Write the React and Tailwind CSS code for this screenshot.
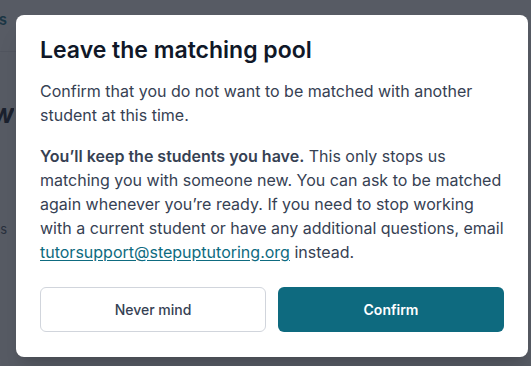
export default function App() {
  return (
    <div className="relative h-[366px] w-[531px] overflow-hidden bg-white font-['Inter',sans-serif]">
      {/* page behind the overlay, mostly hidden */}
      <div className="flex h-full w-[16px] flex-col">
        <div className="h-[52px] w-full border-b border-gray-200 pt-[9px]">
          <div className="flex w-[7px] justify-end overflow-hidden">
            <span className="whitespace-nowrap text-[15px] font-semibold text-[#0e6b80]">Students</span>
          </div>
        </div>
        <div className="mt-[42px] flex w-[14px] justify-end overflow-hidden">
          <span className="whitespace-nowrap text-[26px] font-bold italic text-gray-900">New</span>
        </div>
        <div className="mt-[87px] flex w-[7px] justify-end overflow-hidden">
          <span className="whitespace-nowrap text-[13px] text-gray-600">Matches</span>
        </div>
      </div>

      {/* overlay */}
      <div className="absolute inset-0 bg-[#1f2430]/75" />

      {/* dialog */}
      <div className="absolute left-[16px] top-[15px] w-[512px] rounded-lg bg-white px-6 pb-[25px] pt-[21px] shadow-xl">
        <h2 className="text-[23px] font-semibold leading-7 text-gray-900">Leave the matching pool</h2>
        <p className="mt-[15px] text-base leading-6 text-gray-700">
          Confirm that you do not want to be matched with another student at this time.
        </p>
        <p className="mt-[17px] text-base leading-6 text-gray-700">
          <strong className="font-semibold">You’ll keep the students you have.</strong> This only stops us
          matching you with someone new. You can ask to be matched again whenever you’re ready. If you need
          to stop working with a current student or have any additional questions, email{' '}
          <a href="#" className="text-[#0e6b80] underline underline-offset-2">
            tutorsupport@stepuptutoring.org
          </a>{' '}
          instead.
        </p>
        <div className="mt-[23px] grid grid-cols-2 gap-3">
          <button className="h-[45px] rounded-md border border-gray-300 bg-white text-sm font-medium text-gray-700">
            Never mind
          </button>
          <button className="h-[45px] rounded-md bg-[#0e6a7f] text-sm font-semibold text-white">
            Confirm
          </button>
        </div>
      </div>
    </div>
  )
}
